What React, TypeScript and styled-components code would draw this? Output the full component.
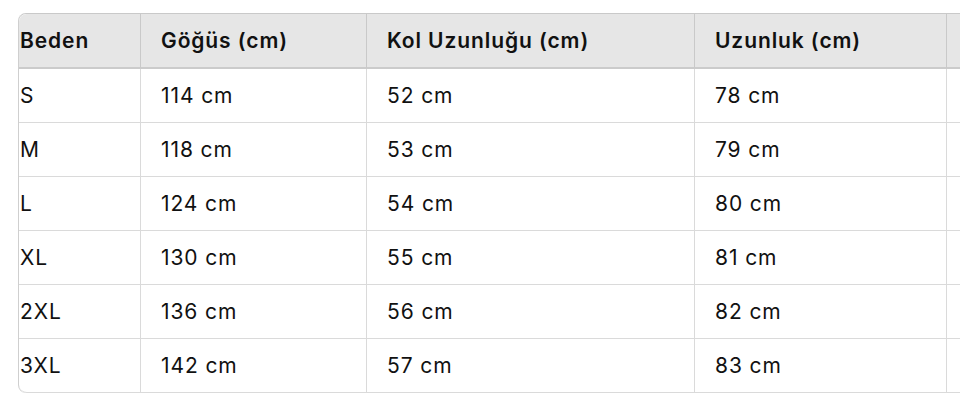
import React from "react";
import styled, { createGlobalStyle } from "styled-components";

const Global = createGlobalStyle`
  html, body {
    margin: 0;
    padding: 0;
    background: #ffffff;
    overflow: hidden;
  }
  body {
    font-family: Inter, "Liberation Sans", Arial, sans-serif;
    color: #111111;
  }
`;

const Page = styled.div`
  padding: 13px 0 0 18px;
  width: 1300px;
`;

const Table = styled.table`
  border-collapse: separate;
  border-spacing: 0;
  table-layout: fixed;
  width: 1200px;
  border-top: 1px solid #c9c9c9;
  border-left: 1px solid #cfcfcf;
  border-top-left-radius: 8px;
  border-bottom-left-radius: 8px;
`;

const HeadCell = styled.th<{ $first?: boolean }>`
  height: 53px;
  padding: 0 0 0 ${(p) => (p.$first ? "1px" : "20px")};
  text-align: left;
  font-size: 21px;
  letter-spacing: 0.9px;
  font-weight: 600;
  background: #e6e6e6;
  border-right: 1px solid #c9c9c9;
  border-bottom: 2px solid #cbcbcb;
  white-space: nowrap;
  &:first-child {
    border-top-left-radius: 8px;
  }
`;

const Cell = styled.td<{ $first?: boolean }>`
  height: 53px;
  padding: 0 0 0 ${(p) => (p.$first ? "1px" : "20px")};
  font-size: 21px;
  letter-spacing: 0.9px;
  font-weight: 400;
  border-right: 1px solid #dadada;
  border-bottom: 1px solid #dadada;
  white-space: nowrap;
`;

const Row = styled.tr`
  &:last-child td:first-child {
    border-bottom-left-radius: 8px;
  }
`;

const widths = [122, 226, 328, 252, 272];
const headers = ["Beden", "Göğüs (cm)", "Kol Uzunluğu (cm)", "Uzunluk (cm)", ""];
const rows = [
  ["S", "114 cm", "52 cm", "78 cm", ""],
  ["M", "118 cm", "53 cm", "79 cm", ""],
  ["L", "124 cm", "54 cm", "80 cm", ""],
  ["XL", "130 cm", "55 cm", "81 cm", ""],
  ["2XL", "136 cm", "56 cm", "82 cm", ""],
  ["3XL", "142 cm", "57 cm", "83 cm", ""],
];

export default function App() {
  return (
    <>
      <Global />
      <Page>
        <Table>
          <colgroup>
            {widths.map((w, i) => (
              <col key={i} style={{ width: w }} />
            ))}
          </colgroup>
          <thead>
            <tr>
              {headers.map((h, i) => (
                <HeadCell key={i} $first={i === 0}>
                  {h}
                </HeadCell>
              ))}
            </tr>
          </thead>
          <tbody>
            {rows.map((r, ri) => (
              <Row key={ri}>
                {r.map((c, ci) => (
                  <Cell key={ci} $first={ci === 0}>
                    {c}
                  </Cell>
                ))}
              </Row>
            ))}
          </tbody>
        </Table>
      </Page>
    </>
  );
}
